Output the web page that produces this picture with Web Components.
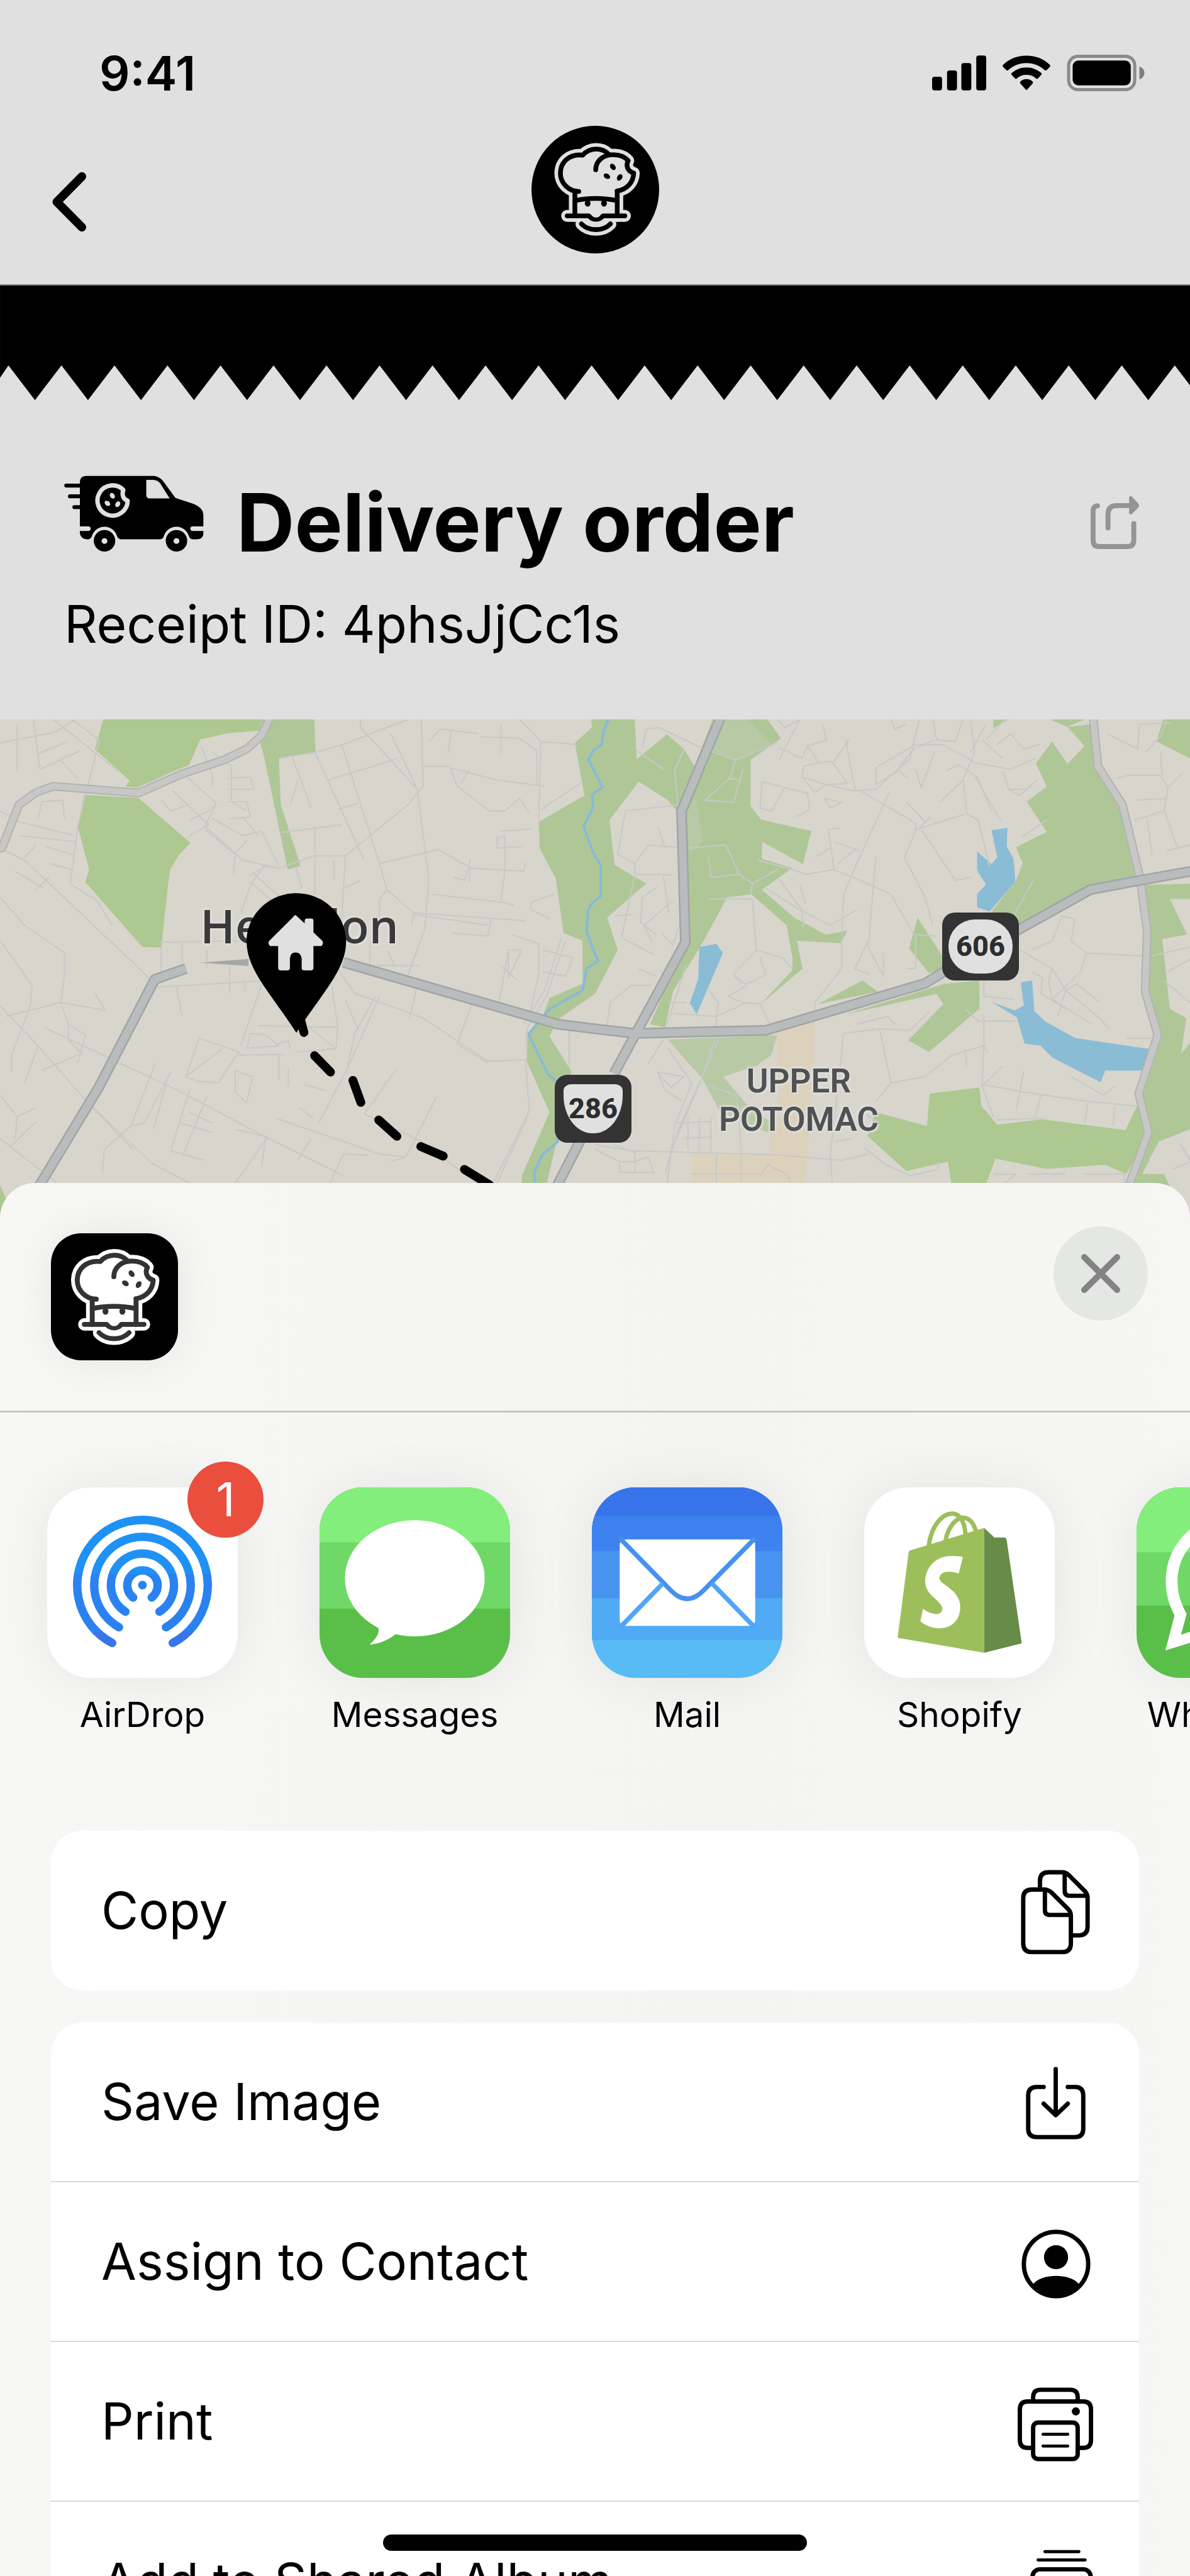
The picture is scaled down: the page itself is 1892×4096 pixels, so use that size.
<!DOCTYPE html>
<html lang="en">
<head>
<meta charset="utf-8">
<meta name="viewport" content="width=device-width, initial-scale=1">
<title>Delivery order</title>
<style>
  html, body { margin: 0; height: 100%; }
  body { background: #e0e0e0; color: #000; font-family: Inter, "Liberation Sans", sans-serif; overflow: hidden; }
</style>
</head>
<body>
<receipt-screen>
  <status-bar time="9:41"></status-bar>
  <top-nav></top-nav>
  <zigzag-edge></zigzag-edge>
  <order-heading receipt="4phsJjCc1s">Delivery order</order-heading>
  <route-map></route-map>
  <share-sheet>
    <share-app slot="apps" label="AirDrop" badge="1">
      <svg viewBox="76 2399 308 308">
        <defs><linearGradient id="air" gradientUnits="userSpaceOnUse" x1="0" y1="2445" x2="0" y2="2661">
          <stop offset=".435" stop-color="#1f91f5"/><stop offset=".435" stop-color="#2a82f0"/>
          <stop offset=".87" stop-color="#2a82f0"/><stop offset=".87" stop-color="#3a74ea"/></linearGradient></defs>
        <rect x="76" y="2399" width="308" height="308" fill="#fff"/>
        <g fill="none" stroke="url(#air)" stroke-width="13.6" stroke-linecap="round">
          <path d="M181 2650.5A105.5 105.5 0 1 1 279 2650.5"/>
          <path d="M192 2625A78 78 0 1 1 268 2625"/>
          <path d="M202.500 2600A51 51 0 1 1 257.500 2600"/>
          <path d="M215 2577A24.500 24.500 0 1 1 245 2577"/>
        </g>
        <circle cx="230" cy="2557" r="7" fill="#2a82f0"/>
      </svg>
    </share-app>
    <share-app slot="apps" label="Messages">
      <svg viewBox="515 2399 308 308">
        <rect x="515" y="2399" width="308" height="308" fill="#5abf49"/>
        <rect x="515" y="2399" width="308" height="196" fill="#6fd866"/>
        <rect x="515" y="2399" width="308" height="89" fill="#84ee7c"/>
        <ellipse cx="669" cy="2546" rx="113" ry="94" fill="#fff"/>
        <path d="M606 2618C614 2630 612 2638 596 2653C612 2652 626 2645 637 2637L650 2625Z" fill="#fff"/>
      </svg>
    </share-app>
    <share-app slot="apps" label="Mail">
      <svg viewBox="955 2399 308 308">
        <rect x="955" y="2399" width="308" height="308" fill="#58bbf5"/>
        <rect x="955" y="2399" width="308" height="247" fill="#50abf4"/>
        <rect x="955" y="2399" width="308" height="179" fill="#4893f0"/>
        <rect x="955" y="2399" width="308" height="103" fill="#3d82ee"/>
        <rect x="955" y="2399" width="308" height="46" fill="#3874e9"/>
        <rect x="1000" y="2483" width="219" height="140" rx="9" fill="#fff"/>
        <path d="M1000 2481L1083 2566Q1109 2592 1135 2566L1219 2481" fill="none" stroke="#4690f0" stroke-width="7.500"/>
        <path d="M1000 2626L1070 2554M1219 2626L1149 2554" fill="none" stroke="#50a6f3" stroke-width="7.500"/>
      </svg>
    </share-app>
    <share-app slot="apps" label="Shopify">
      <svg viewBox="709 237 502 922" preserveAspectRatio="none">
        <rect x="709" y="237" width="502" height="922" fill="#fff"/>
        <g fill="none" stroke="#9dbf5b" stroke-width="7">
          <path vector-effect="non-scaling-stroke" d="M879 520C886 420 915 362 943 364C966 368 976 420 976 480"/>
          <path vector-effect="non-scaling-stroke" d="M923 500C928 430 952 380 972 384C988 388 998 410 1004 455"/>
        </g>
        <path fill="#9dbf5b" d="M830 542L1025 433V1037L797 965L826 552Q827 545 830 542Z"/>
        <path fill="#678c49" d="M1025 433L1052 480H1078Q1083 481 1084 488L1124 992L1025 1037Z"/>
        <path fill="#fff" d="M969 573Q945 565 925 571C888 584 868 640 870 700C872 762 914 785 915 825C914 850 900 852 893 849Q875 842 864 824L857 885Q875 915 905 919C945 918 962 870 962 815C960 725 907 710 907 675C910 642 933 638 958 654Z"/>
      </svg>
    </share-app>
    <share-app slot="apps" label="WhatsApp">
      <svg viewBox="1426 237 502 922" preserveAspectRatio="none">
        <rect x="1426" y="237" width="502" height="922" fill="#5abf49"/>
        <rect x="1426" y="237" width="502" height="572" fill="#6fd866"/>
        <rect x="1426" y="237" width="502" height="314" fill="#84ee7c"/>
        <path fill="#fff" fill-rule="evenodd" d="M1677 370C1580 370 1503 510 1503 690C1503 750 1511 805 1526 857L1502 1026L1592 975C1617 1000 1646 1010 1677 1010C1775 1010 1851 870 1851 690S1775 370 1677 370ZM1677 427C1598 427 1534 545 1534 690C1534 750 1542 795 1558 850L1543 950L1598 918C1620 942 1646 953 1677 953C1758 953 1820 835 1820 690S1758 427 1677 427Z"/>
      </svg>
    </share-app>

    <action-list slot="actions">
      <action-row label="Copy">
        <svg viewBox="1642 3012 124 140">
          <path d="M1678 3044V3034Q1678 3020 1692 3020H1714Q1720 3020 1725 3025L1750 3050Q1755 3055 1755 3061V3108Q1755 3122 1741 3122H1732"/>
          <path d="M1718 3022V3050Q1718 3058 1726 3058H1754"/>
          <path d="M1664 3048H1685Q1691 3048 1697 3053L1723 3079Q1728 3084 1728 3090V3135Q1728 3149 1714 3149H1665Q1651 3149 1651 3135V3062Q1651 3048 1665 3048Z"/>
          <path d="M1686 3050V3081Q1686 3089 1694 3089H1727"/>
        </svg>
      </action-row>
    </action-list>
    <action-list slot="actions">
      <action-row label="Save Image">
        <svg viewBox="1642 3321 124 140">
          <path d="M1684 3367H1673Q1659 3367 1659 3381V3435Q1659 3448 1673 3448H1735Q1748 3448 1748 3435V3381Q1748 3367 1735 3367H1723"/>
          <path d="M1703.500 3338V3412M1684 3394L1703.500 3412.500L1723 3394"/>
        </svg>
      </action-row>
      <action-row label="Assign to Contact">
        <svg viewBox="1642 3578 124 140">
          <circle cx="1704" cy="3652" r="52"/>
          <g style="fill:currentColor;stroke:none"><circle cx="1704" cy="3641" r="19.500"/>
          <path d="M1666 3686C1678 3666 1730 3666 1742 3686C1725 3710 1683 3710 1666 3686Z"/></g>
        </svg>
      </action-row>
      <action-row label="Print">
        <svg viewBox="1642 3836 124 140">
          <path d="M1667 3872V3867Q1667 3855 1679 3855H1727Q1739 3855 1739 3867V3872"/>
          <path d="M1667 3949H1658Q1645.500 3949 1645.500 3936V3887Q1645.500 3874 1658 3874H1748Q1760.500 3874 1760.500 3887V3936Q1760.500 3949 1748 3949H1739"/>
          <rect x="1667" y="3908" width="72" height="59" rx="8"/>
          <path stroke-width="5" d="M1683 3927H1723M1683 3946H1723"/>
          <circle cx="1736" cy="3890" r="6.500" style="fill:currentColor;stroke:none"/>
        </svg>
      </action-row>
      <action-row label="Add to Shared Album">
        <svg viewBox="1642 4094 124 140">
          <path stroke-width="5" d="M1686 4115.500H1741M1675 4129H1751"/>
          <rect x="1666" y="4144" width="94" height="70" rx="12"/>
        </svg>
      </action-row>
    </action-list>
  </share-sheet>
  <home-indicator></home-indicator>
</receipt-screen>

<script>
const define = (name, render) => customElements.define(name, class extends HTMLElement {
  constructor() { super(); this.attachShadow({ mode: 'open' }); }
  connectedCallback() { this.shadowRoot.innerHTML = render(this); }
});

define('receipt-screen', () => `
  <style>
    :host { display: block; position: relative; height: 100vh; overflow: hidden; background: #e0e0e0; }
  </style>
  <slot></slot>`);

define('status-bar', el => `
  <style>
    :host { display: flex; align-items: center; justify-content: space-between; box-sizing: border-box;
      height: 200px; padding: 32px 72px 0 158px; }
    time { font-size: 76px; line-height: 90px; font-weight: 600; }
    .signs { display: flex; align-items: center; gap: 26px; }
    svg { display: block; }
  </style>
  <time>${el.getAttribute('time')}</time>
  <div class="signs">
    <svg width="86" height="56" viewBox="1505 90 87 56" role="img" aria-label="Signal">
      <rect x="1505" y="124" width="16" height="22" rx="4"/><rect x="1529" y="114" width="16" height="32" rx="4"/>
      <rect x="1552" y="102" width="16" height="44" rx="4"/><rect x="1576" y="90" width="16" height="56" rx="4"/>
    </svg>
    <svg width="76" height="56" viewBox="1619 88 77 57" role="img" aria-label="Wi-Fi">
      <path d="M1657.500 88.500C1642 88.500 1629 94 1619.500 103.500Q1618.500 105 1619.500 106.500L1625 112Q1626.500 113.500 1628 112C1636 104.500 1646 100.500 1657.500 100.500S1679 104.500 1687 112Q1688.500 113.500 1690 112L1695.500 106.500Q1696.500 105 1695.500 103.500C1686 94 1673 88.500 1657.500 88.500Z"/>
      <path d="M1657.500 107.500C1648 107.500 1640 111 1633.500 116.500Q1632 118 1633.500 119.500L1639 125.500Q1640.500 127 1642 125.500C1646 121.500 1651 119.500 1657.500 119.500S1669 121.500 1673 125.500Q1674.500 127 1676 125.500L1681.500 119.500Q1683 118 1681.500 116.500C1675 111 1667 107.500 1657.500 107.500Z"/>
      <path d="M1657.500 126.500C1653.500 126.500 1650 128 1647.500 130.500Q1646.500 132 1647.500 133.500L1656.500 143.500Q1657.500 145 1658.500 143.500L1667.500 133.500Q1668.500 132 1667.500 130.500C1665 128 1661.500 126.500 1657.500 126.500Z"/>
    </svg>
    <svg width="124" height="58" viewBox="1722 88 125 59" role="img" aria-label="Battery">
      <rect x="1724.500" y="90.500" width="107" height="54" rx="15" fill="none" stroke="#8a8a8a" stroke-width="5"/>
      <rect x="1731" y="97.500" width="94" height="40" rx="9"/>
      <path d="M1839 107Q1847 110 1847 117.500T1839 128Z" fill="#7d7d7d"/>
    </svg>
  </div>`);

define('brand-mark', el => `
  <style>
    :host { display: block; background: #000; --ink: #000; --paper: #e0e0e0; }
    svg { display: block; width: 100%; height: 100%; }
    .halo, .ink { fill: none; stroke-linecap: round; stroke-linejoin: round; }
    .halo { stroke: var(--paper); stroke-width: 58; }
    .ink { stroke: var(--ink); stroke-width: 23; }
  </style>
  <svg viewBox="${el.hasAttribute('large') ? '127 78 594 594' : '110 68 618 618'}" role="img" aria-label="Bakery">
    <defs>
      <g id="lines">
        <path d="M339 386C290 386 250 345 250 298C250 245 292 203 358 210C392 172 450 172 482 204"/>
        <path d="M421 281C421 240 455 208 505 208C535 208 562 218 578 237C566 260 574 288 605 297C603 340 575 375 525 384"/>
        <path d="M320 386V504M525 384V504"/>
        <path d="M283 504H388C403 526 441 526 456 504H562"/>
        <path d="M352 543C388 580 456 580 492 543"/>
      </g>
    </defs>
    <use href="#lines" class="halo"/>
    <path fill="var(--paper)" d="M339 386C290 386 250 345 250 298C250 245 292 203 358 210C392 172 450 172 482 204C535 200 562 218 578 237C566 260 574 288 605 297C603 340 575 375 525 384V504H320V386Z"/>
    <use href="#lines" class="ink"/>
    <path class="ink" stroke-linecap="butt" d="M322 430C380 416 460 416 523 430"/>
    <g fill="var(--ink)">
      <ellipse cx="382" cy="443" rx="14" ry="16"/><ellipse cx="461" cy="443" rx="14" ry="16"/>
      <ellipse cx="504" cy="267" rx="12" ry="17" transform="rotate(-38 504 267)"/>
      <ellipse cx="475" cy="312" rx="12" ry="17" transform="rotate(-58 475 312)"/>
      <ellipse cx="537" cy="318" rx="12" ry="17" transform="rotate(34 537 318)"/>
    </g>
    <path fill="var(--paper)" d="M396 488H448C444 520 402 520 396 488Z"/>
  </svg>`);

define('top-nav', () => `
  <style>
    :host { display: grid; grid-template-columns: 1fr auto 1fr; align-items: end; height: 203px;
      padding: 0 64px 49px; border-bottom: 2px solid #808080; }
    button { width: 92px; height: 164px; padding: 0; border: 0; background: none; }
    svg { display: block; margin: 0 auto; }
    brand-mark { width: 203px; height: 203px; border-radius: 50%; overflow: hidden; }
  </style>
  <button aria-label="Back"><svg width="56" height="96" viewBox="82 277 57 97">
    <path d="M131 284.500L90.500 325.500L131 366.500" fill="none" stroke="#000" stroke-width="14" stroke-linecap="round" stroke-linejoin="round"/>
  </svg></button>
  <brand-mark></brand-mark>`);

define('zigzag-edge', () => {
  const pitch = 85.54, firstNotch = 13.6;
  let edge = 'M0 0V149L13.6 129';
  for (let i = 0; i < 23; i++) {
    const x = firstNotch + i * pitch;
    edge += `L${x + pitch / 2} 185L${x + pitch} 129`;
  }
  return `
  <style>:host { display: block; } svg { display: block; width: 100%; height: auto; }</style>
  <svg viewBox="0 0 1920 186" aria-hidden="true"><path d="${edge}V0Z"/></svg>`;
});

define('order-heading', el => `
  <style>
    :host { display: block; padding: 119px 80px 101px 102px; }
    .row { display: flex; align-items: center; gap: 52px; }
    .van { display: block; align-self: flex-start; }
    h1 { flex: 1; margin: 0; font-size: 128px; line-height: 150px; font-weight: 700; }
    button { padding: 0; border: 0; background: none; }
    button svg { display: block; }
    p { margin: 37px 0 0; font-size: 82px; line-height: 100px; }
  </style>
  <div class="row">
    <svg class="van" width="222" height="122" viewBox="66 84 675 371" aria-hidden="true">
      <path d="M170 86H500Q525 88 545 112L604 193L690 221Q738 240 739 275V330H687a11 11 0 0 0 0 22H739V370Q734 393 708 393H690Q675 393 670 380C652 316 566 316 548 378Q543 393 525 393H345Q328 393 322 378C304 316 218 316 200 378Q194 393 177 393Q147 390 142 365V352H183a11 11 0 0 0 0-22H142V115Q143 88 170 86Z"/>
      <path d="M76 133H150M94 185H150M115 237H150" stroke="#000" stroke-width="19" stroke-linecap="round"/>
      <path d="M463 105H495Q518 106 530 122L576 195H480Q463 195 463 178Z" fill="#e0e0e0"/>
      <circle cx="261" cy="400" r="52"/><circle cx="609" cy="400" r="52"/>
      <g fill="#e0e0e0"><circle cx="261" cy="401" r="14"/><circle cx="609" cy="401" r="14"/>
        <ellipse cx="299" cy="182" rx="11" ry="15" transform="rotate(-35 299 182)"/>
        <ellipse cx="275" cy="219" rx="11" ry="15" transform="rotate(-50 275 219)"/>
        <ellipse cx="325" cy="223" rx="11" ry="15" transform="rotate(30 325 223)"/></g>
      <path d="M352 154C344 178 351 200 373 206A73 73 0 1 1 352 154Z" fill="none" stroke="#e0e0e0" stroke-width="21" stroke-linejoin="round"/>
    </svg>
    <h1><slot></slot></h1>
    <button aria-label="Share receipt"><svg width="80" height="90" viewBox="1754 799 81 91">
      <g fill="none" stroke="#949494" stroke-width="8" stroke-linecap="round" stroke-linejoin="round">
        <path d="M1767 817.500Q1760 818 1760 826V873Q1760 883 1770 883H1815Q1825.500 883 1825.500 873V846"/>
        <path d="M1784 853V831Q1784 817 1798 817H1822"/></g>
      <path d="M1818 804Q1819 800 1823 803L1833 814Q1835 817 1833 820L1823 830Q1819 833 1818 829Z" fill="#949494"/>
    </svg></button>
  </div>
  <p>Receipt ID: ${el.getAttribute('receipt')}</p>`);

define('route-map', () => `
  <style>
    :host { display: block; position: relative; height: 797px; background: #d8d5cd; overflow: hidden; }
    svg.layer { position: absolute; inset: 0; width: 100%; height: 100%; }
    .layer path { vector-effect: non-scaling-stroke; stroke-linejoin: round; }
    .g { fill: #afc797; } .gs { fill: #adc890; } .gl { fill: #b8c9a5; } .w { fill: #8bbcd5; } .t { fill: #dcd1bb; }
    .minor { fill: none; stroke: #c6c9c8; stroke-width: 2; }
    .edge { fill: none; stroke: #a2a4a6; stroke-width: 17; } .road { fill: none; stroke: #b8bcbd; stroke-width: 12; }
    .edge2 { fill: none; stroke: #b3b3b4; stroke-width: 14; stroke-linecap: round; } .road2 { fill: none; stroke: #c7c7c6; stroke-width: 10; stroke-linecap: round; }
    .river { fill: none; stroke: #86bad8; stroke-width: 4; }
    .dash { fill: none; stroke: #000; stroke-width: 14; stroke-linecap: round; }
    .place, .shield { position: absolute; transform: translate(-50%, -50%); }
    .place { text-align: center; color: #393939; font-family: "Open Sans", "Noto Sans", sans-serif; font-weight: 600; font-size: 74px; line-height: 90px;
      text-shadow: 0 0 4px #e0e0e0, 0 0 6px #e0e0e0, 2px 2px 2px #e0e0e0, -2px -2px 2px #e0e0e0; }
    .area { color: #4f5250; font-family: Roboto, sans-serif; font-weight: 600; font-size: 53px; line-height: 61px; }
    .shield { display: grid; place-items: center; width: 122px; height: 108px; border-radius: 20px; background: #333; }
    .shield span { display: grid; place-items: center; width: 102px; height: 86px; border-radius: 42px; background: #e0e0e0; color: #2d2d2d;
      font-family: Roboto, sans-serif; font-weight: 800; font-size: 45px; line-height: 60px; }
    .shield.us span { width: 94px; height: 78px; border-radius: 12px 12px 46px 46px / 10px 10px 60px 60px; }
  </style>
  <svg class="layer" viewBox="0 24 3136 1622" preserveAspectRatio="none" aria-hidden="true">
    <path class="gs" d="M272 24H690L685 60L605 68L528 88L498 172L470 185L360 245L330 240L342 222L250 120Z"/>
    <path class="g" d="M690 24H828L832 132L735 150L740 300L792 498L758 510L697 150L685 95Z"/>
    <path class="gs" d="M222 268L365 278L502 424L470 465L448 510L440 590L425 762L375 760L225 550L235 510L205 370Z"/>
    <path class="gs" d="M0 1530L40 1646H0Z"/>
    <g transform="translate(1568 0)">
      <path class="g" d="M-10 24H105L110 152L190 72L235 120L262 175L310 24H455L490 85L410 155V305L438 348L570 385L548 492L440 420V475L520 505L440 575L525 665L608 720L665 708L648 748L532 740L547 830L437 945L520 835V795L505 690L412 590L348 600L282 750L205 905L185 1020L145 1010L240 745L235 560L215 320L192 285L115 225L38 350L52 495L135 555L32 665L60 770L0 912L-98 995L-120 1050L-63 1160V1190L-128 1530H-193V1500L-120 1295L-180 1130L-178 1040L-138 985L-120 925L-33 880V740L-83 715L-103 540L-146 440L-148 355L-28 270L-53 100L-8 50Z"/>
      <path class="gl" d="M345 24H405L465 105L375 160L300 125ZM265 275L285 415L250 460L240 330ZM192 1060L480 1045L465 1110L425 1145L338 1180L400 1270L465 1330L455 1360L330 1295L285 1190Z"/>
      <path class="g" d="M1205 95L1245 168L1290 110L1245 48L1305 40L1325 185L1380 290L1437 535L1305 565L1110 690L1045 645L1108 550L1127 490L1110 437L1190 388L1138 290L1190 242L1162 165ZM1050 24H1090L1050 52ZM1200 24H1290L1245 48ZM1497 24H1568V150L1480 95ZM1445 560L1568 555V605H1515L1560 720L1495 735L1515 960L1558 990L1545 1105L1568 1070V1350L1485 1390L1442 1495H1500L1520 1550H1415L1462 1360L1440 1240L1488 1045L1450 905Z"/>
      <path class="g" d="M588 945L705 868L745 905ZM850 665L918 795V830L880 845L828 765ZM655 980L900 912L918 945L825 1062L880 1100L1013 960V868L920 880Z"/>
      <path class="gs" d="M740 1295L875 1340L882 1235L1013 1215L1018 1275L1060 1335L1180 1318L1398 1353L1430 1270L1462 1360L1400 1495L1345 1465L1190 1478L1055 1445L1030 1530H940L930 1455L820 1485L718 1372Z"/>
      <path class="t" d="M480 1035L580 1005L573 1200L560 1450L548 1530H255V1425L460 1430V1370L485 1290Z"/>
      <path class="w" d="M275 760L320 750L337 780L268 978L250 942L272 865ZM1045 382L1087 375L1085 435L1103 475L1108 550L1040 645L1007 632V588L1030 558L1007 512V452L1045 492L1060 470ZM1122 875L1152 868L1158 968L1185 1000L1265 1055L1460 1090L1448 1160H1345L1332 1198L1205 1118L1175 1080L1132 1073L1112 988L1045 938L1105 965L1130 950Z"/>
    </g>
    <path class="minor" d="M0 100L145 65L200 24M45 40V190M88 24L105 185L212 125M100 135L180 95M140 24L310 190M190 24L262 90M262 90L205 370L185 560M155 150L205 215M0 320L50 355L195 400M50 400L200 420M110 290L165 285L170 345M100 350L110 290M0 440L65 480L190 625L350 810L415 890M0 600L65 690L170 780V850L160 940M40 515L115 570M90 580L130 535M130 490L190 510M190 560L255 610L295 690M120 435L195 462M65 470L95 430M0 740L85 885L80 950L30 1110V1165M15 985L160 940L278 965L250 910M160 940L180 1010L225 1045L205 1135M180 1010V1060L215 1105L110 1160M0 950L100 1080L225 1255L400 1460L500 1524M100 1080L65 1200M0 1240L45 1310L40 1380M45 1310L95 1280M0 1380L115 1490L150 1524M25 1410L95 1325M115 1020L280 1115L470 1225L700 1375L905 1500M225 1255L350 1415"/>
    <path class="minor" d="M415 890L690 870M425 762V840M480 745V810M545 770V830M605 820V910M645 870V905M420 745L650 740M465 890L480 985M410 1135L345 1340L380 1330L450 1165M345 1340L275 1415L270 1495M440 1190L405 1350M500 1220L450 1420M545 1245L480 1440M490 1180L525 1055L630 1100L575 1200L520 1195ZM585 1090L490 1180M635 1080L690 880M660 1040L700 1045L735 1080L650 1088ZM725 1075L760 1065L765 1090M630 1110L750 1108M735 1110V1190M620 1160L665 1180L650 1265L620 1230ZM680 1015L890 1020L875 890M815 1020L885 1090L780 1100M885 1090L890 1020M475 1330L560 1360M500 1295L560 1330M450 1420L540 1450M620 1350L705 1375L620 1524M700 1375L690 1470M730 1315L870 1375L1000 1430L1070 1440M820 1380L785 1450M905 1430L870 1524M760 1150V1210M800 1205L860 1225M790 1280L825 1315M970 1435L905 1430M1045 1155L960 1300M1150 1245L1070 1440L1030 1455M960 1300L1110 1390L1230 1500M915 1155L935 1040L990 920M840 1330L915 1155L1000 920M910 930L945 1030M890 830L935 910L1115 990L1285 1130L1390 1125M1285 1135L1205 1075L1245 940M1385 1130L1395 1290L1300 1524M1390 1310L1310 1524"/>
    <path class="minor" d="M470 185L570 295L540 370L640 480L735 505L830 465H910L1075 300L1115 240L1110 24M530 110L560 205V240M560 130L610 175V290L650 320M600 215L660 210L670 250H600M600 290H650L660 340L605 345M500 350L550 320L570 295M425 285L450 320L495 300M455 255L550 365L500 400M560 345L640 400L690 385L735 500M540 380L620 460L615 525M620 460L650 415M640 340L680 400M735 150L830 130L905 105L1075 24M770 145L820 310M785 220L765 300M900 105L1000 490L1020 575L1000 605V680M830 130L960 480M950 24V50L1100 250L1130 540L1120 700L1075 850M865 220L1050 150M890 315L945 295M740 390L900 365M830 370V590M910 465L905 575L900 680M830 465L830 590M1030 70L1100 250M780 500L795 570M655 530L700 500L735 505M670 525L750 610M660 550L735 630M635 650L660 560L700 490M905 570L950 545M880 545V480M1000 490L1155 445L1240 505L1380 515L1385 485M1240 475L1225 545L1195 535M1310 400V440L1380 435M1320 385L1400 378M1310 410L1330 400V520L1320 615M1140 590L1320 615L1355 625M1085 650L1385 675M1090 655L1285 690M1295 670L1285 725L1190 715M1085 690L1090 650L1020 575"/>
    <path class="minor" d="M1115 175H1185L1205 240L1290 320H1330L1370 280L1395 330M1215 230L1235 190M1185 180L1310 220L1435 240M1130 95L1160 55L1260 70M1190 55L1180 135M1265 80L1370 85L1415 125V235M1320 40V135M1370 24L1425 95L1520 105M1425 95L1420 350M1425 315L1530 230M1240 500L1235 550M1400 615L1460 590M1450 670L1400 640V615M1350 720L1420 750V850L1395 980M1340 770H1375L1340 860ZM1430 770L1510 795L1490 855L1430 840M1320 820L1360 865M1340 770L1315 940M1480 730L1435 900L1380 1010M1490 740L1440 920L1390 1020L1385 1080M1075 850L1100 770M975 740V820H1105M1020 770L1040 820M1100 880L1080 990M1500 1030V1150"/>
    <g transform="translate(1568 0)">
      <path class="minor" d="M480 24L500 50L540 24M540 24L510 95L485 155M485 115L545 150L560 110L610 90L600 40M560 110L590 165L625 160L665 230L610 235L545 210L550 175L590 165M440 225L500 245L560 262L565 315L530 340M500 245L465 320L435 310L440 225M545 210L580 260L610 235L680 255L740 250L830 150L855 24M605 280L650 292L620 310ZM660 90L685 250M670 90L630 160M780 24L790 55L820 40M845 105H915L1005 165L1095 185L1160 150M890 24L900 90L950 95L970 24M845 105L740 180V235L800 190L825 215M800 180L840 120L895 90M845 185L860 245L895 130M990 24L1000 130L970 220L980 330L1010 350L1040 500M1030 40L990 130M1020 90L1075 150M1080 24L1030 90M1060 105L1095 70L1130 120L1170 105M925 190L960 170L1000 205L1070 355M970 220L910 290M1005 205L1045 320M1075 190L1090 250L1120 270L1165 220M1090 250H1140M845 380L975 330M700 255L845 360V385L815 470L870 600L890 690M820 290L870 355M860 380L950 545L990 535M845 385L885 340M775 260L690 490L655 590L650 745V830L580 940L575 1010M740 470L720 760L760 855V780M720 740L685 830L725 850M615 380L645 375M615 380L630 510L555 525L520 510L430 480M630 510L700 545L780 590L840 720L900 725M630 420L700 450M640 490L690 440M580 470L620 440M450 570L540 640L620 690L690 640M540 560L555 620M485 540L545 640L550 700M1125 405L1190 350"/>
      <path class="minor" d="M110 125L180 185M135 55L170 50L270 110L370 155L480 100M135 55L125 110M235 120L210 190L220 320M370 155L355 215L290 285L365 292L390 185M355 215L385 220M80 320L220 300M80 320L60 460L105 490L140 430L245 440L345 430L380 525L415 555L410 590M105 490L105 525L205 527M300 470L305 535L380 525M415 555L480 510M105 525L70 730M165 370L185 440M180 530L195 650M50 660L100 655M70 730L155 785M125 600L120 680L160 720M125 600L165 565M205 610L130 690L150 745M175 715L205 755L225 680M30 1030L40 940L95 885H150M115 830L160 855M300 605H415L425 770L495 795L520 830M425 770L365 850L400 885L350 920L400 945M365 850L385 880M435 795L450 850L400 880M195 940L240 940M200 975L320 985M300 900L325 940L320 985M435 945L460 1010M435 945L400 940L320 985V1050L285 1170M240 820L190 1010M180 1060L140 1140M165 1165L235 1180L200 1215ZM165 1165L185 1225L230 1260M190 1085L255 1200L210 1340L190 1524M320 1050L270 1220L200 1420M330 1050L220 1350L185 1490"/>
      <path class="minor" d="M0 1400L100 1420L460 1432L650 1450L720 1430M50 1400L105 1425V1490M0 1415L65 1455H100L140 1440L155 1490H65V1455M215 1330L305 1325M235 1380L310 1375M245 1310V1415M275 1310V1420M305 1310V1420M300 1210L375 1240L385 1420V1524M320 1430V1524M255 1495H385L440 1495L455 1465L505 1495L515 1524M655 1040L750 1025L780 1200L740 1260M655 1040L640 1220L620 1430L625 1524M750 1025L830 1030L880 970M690 1010L770 985L790 1010M780 1200L870 1180L940 1110L1025 1080L1035 1100M1025 980V1080M975 960L1010 1000L1110 1000M1025 1080L1020 1210L1050 1310M975 1090L980 1145M1020 1205L1130 1230L1300 1260L1430 1275M1130 1160L1110 1290M1175 1240L1160 1310M1300 1260L1290 1330M1370 1275L1365 1340M1075 1145L1020 1210M1255 1180L1340 1240L1370 1210M1060 1320L1180 1315M630 1390L680 1380M710 1410L760 1460L830 1500L905 1480V1455M700 1290L750 1330"/>
      <path class="minor" d="M1120 770L1205 830L1240 900L1330 990L1355 1025M1230 660L1265 670L1255 740L1295 780L1465 790L1568 760M1230 660L1205 740L1150 770M1295 780L1280 840L1205 930L1195 870L1205 830M1150 840L1180 860L1175 910L1240 960M1240 900L1270 880L1330 940M1240 900L1220 985M1205 930L1310 1010M1155 545L1105 655M845 720V830L820 830M1025 860V920L1105 930M1430 40L1520 35M1435 45L1430 120L1350 70M1450 130L1490 80L1505 30M1375 215L1405 205H1490L1510 245L1550 195M1490 130L1495 205M1425 285L1505 280M1510 245L1500 320L1420 350M1500 320L1535 440M1455 345L1468 465M1505 450L1568 430M1400 1055H1470M1510 840L1568 800M1500 870L1568 940M1540 1395L1568 1450M1520 1480L1568 1455M1050 1495H1110L1080 1524M1140 1495H1240M1290 1495H1395V1524"/>
    </g>
    <path class="river" d="M1603 24L1590 65L1586 105L1563 125L1551 155L1588 243L1560 268L1563 310L1538 370L1563 455L1583 495V595L1560 620L1550 640L1546 710L1565 775L1576 805L1546 830L1536 900L1450 960L1413 1012L1393 1042L1443 1170L1470 1200V1390L1428 1435L1408 1490L1411 1530"/>
    <path fill="#a5a7a9" d="M527 811L655 799V822Z"/>
    <path class="edge2" d="M5 440L50 300L95 260L140 240L365 262L480 200L590 155L650 120L690 75L710 20M2881 20L2893 175L2958 300L3005 540L3023 710L3018 905L3051 1045L3001 1235L3026 1360L2976 1530"/>
    <path class="road2" d="M5 440L50 300L95 260L140 240L365 262L480 200L590 155L650 120L690 75L710 20M2881 20L2893 175L2958 300L3005 540L3023 710L3018 905L3051 1045L3001 1235L3026 1360L2976 1530"/>
    <path class="edge" d="M100 1540L260 1215L408 865L490 830M905 810L1470 1010L1568 1025L1673 1040L2018 1030L2438 878L2488 840L2683 705L2873 575L3003 545L3140 515M1898 20L1796 320L1806 745L1618 1170M1530 1385L1465 1540"/>
    <path class="road" d="M100 1540L260 1215L408 865L490 830M905 810L1470 1010L1568 1025L1673 1040L2018 1030L2438 878L2488 840L2683 705L2873 575L3003 545L3140 515M1898 20L1796 320L1806 745L1618 1170M1530 1385L1465 1540"/>
  </svg>
  <div class="place" style="left:476px;top:328px">Herndon</div>
  <div class="place area" style="left:1270px;top:606px">UPPER<br>POTOMAC</div>
  <div class="shield" style="left:1559px;top:361px"><span>606</span></div>
  <div class="shield us" style="left:943px;top:619px"><span>286</span></div>
  <svg class="layer" viewBox="0 24 3136 1622" preserveAspectRatio="none" role="img" aria-label="Route to home">
    <path class="dash" d="M793 1000L801 1037M829 1112L871 1165M930 1192L951 1263M998 1320L1046 1373M1109 1406L1168 1437M1224 1480L1290 1530"/>
    <path d="M781 586C853 586 912 655 912 744C912 835 845 915 781 1038C717 915 650 835 650 744C650 655 709 586 781 586Z"/>
    <path fill="#e0e0e0" d="M779 657L803 684V675Q803 668 810 668H820Q826 668 826 675V713L849 740Q854 748 847 757H826V828Q826 836 819 836H802Q795 836 795 828V798Q793 778 779 778T764 798V828Q764 836 757 836H740Q733 836 733 828V757H712Q704 748 710 740L772 664Q776 657 779 657Z"/>
  </svg>`);

define('share-sheet', () => `
  <style>
    :host { display: block; position: relative; margin-top: -60px; border-radius: 56px 56px 0 0; overflow: hidden;
      background: linear-gradient(90deg, #f7f7f5, #f4f4f2 60%, #f6f6f5); }
    header { display: flex; align-items: center; justify-content: space-between; box-sizing: border-box; height: 365px;
      padding: 69px 67px 69px 81px; border-bottom: 3px solid #c6c6c5; }
    brand-mark { width: 202px; height: 202px; border-radius: 48px; overflow: hidden; box-shadow: 0 0 70px rgba(0,0,0,.07); --ink: #333; --paper: #fff; }
    .close { display: grid; place-items: center; align-self: flex-start; width: 150px; height: 150px; padding: 0; border: 0; border-radius: 50%; background: #e5e7e4; }
    .apps { display: flex; gap: 130px; padding: 119px 75px 150px; }
    .actions { display: flex; flex-direction: column; gap: 51px; padding: 0 81px; }
  </style>
  <header>
    <brand-mark large></brand-mark>
    <button class="close" aria-label="Close"><svg width="64" height="64" viewBox="0 0 65 65">
      <path d="M6 6L59 59M59 6L6 59" stroke="#828382" stroke-width="10" stroke-linecap="round"/></svg></button>
  </header>
  <div class="apps"><slot name="apps"></slot></div>
  <div class="actions"><slot name="actions"></slot></div>`);

define('share-app', el => `
  <style>
    :host { display: block; flex: none; width: 303px; }
    button { display: block; position: relative; width: 100%; padding: 0; border: 0; background: none; color: inherit; font: inherit; }
    .tile { display: block; height: 303px; border-radius: 70px; overflow: hidden; box-shadow: 0 0 90px rgba(0,0,0,.07); }
    ::slotted(svg) { display: block; width: 100%; height: 100%; }
    .label { display: block; margin-top: 23px; font-size: 55px; line-height: 70px; white-space: nowrap; }
    .badge { position: absolute; top: -41px; right: -41px; width: 121px; height: 121px; border-radius: 50%; background: #ea4e3d;
      color: #fff; font-size: 74px; line-height: 121px; text-align: center; }
  </style>
  <button><span class="tile"><slot></slot></span>${el.hasAttribute('badge') ? `<span class="badge">${el.getAttribute('badge')}</span>` : ''}
  <span class="label">${el.getAttribute('label')}</span></button>`);

define('action-list', () => `
  <style>:host { display: block; border-radius: 50px; overflow: hidden; background: #fff; }</style>
  <slot></slot>`);

define('action-row', el => `
  <style>
    :host { display: block; box-sizing: border-box; height: 254px; border-bottom: 2px solid #dadada; }
    :host(:last-child) { border-bottom: 0; }
    button { display: flex; align-items: center; justify-content: space-between; width: 100%; height: 100%; padding: 0 71px 0 80px;
      border: 0; background: none; color: inherit; font: inherit; font-size: 81px; line-height: 100px; text-align: left; }
    ::slotted(svg) { display: block; width: 122px; height: 138px; fill: none; stroke: currentColor; stroke-width: 7; stroke-linecap: round; stroke-linejoin: round; overflow: visible; }
  </style>
  <button><span>${el.getAttribute('label')}</span><slot></slot></button>`);

define('home-indicator', () => `
  <style>:host { display: block; position: absolute; left: 50%; bottom: 40px; width: 674px; height: 26px; margin-left: -337px; border-radius: 13px; background: #000; }</style>`);
</script>
</body>
</html>
